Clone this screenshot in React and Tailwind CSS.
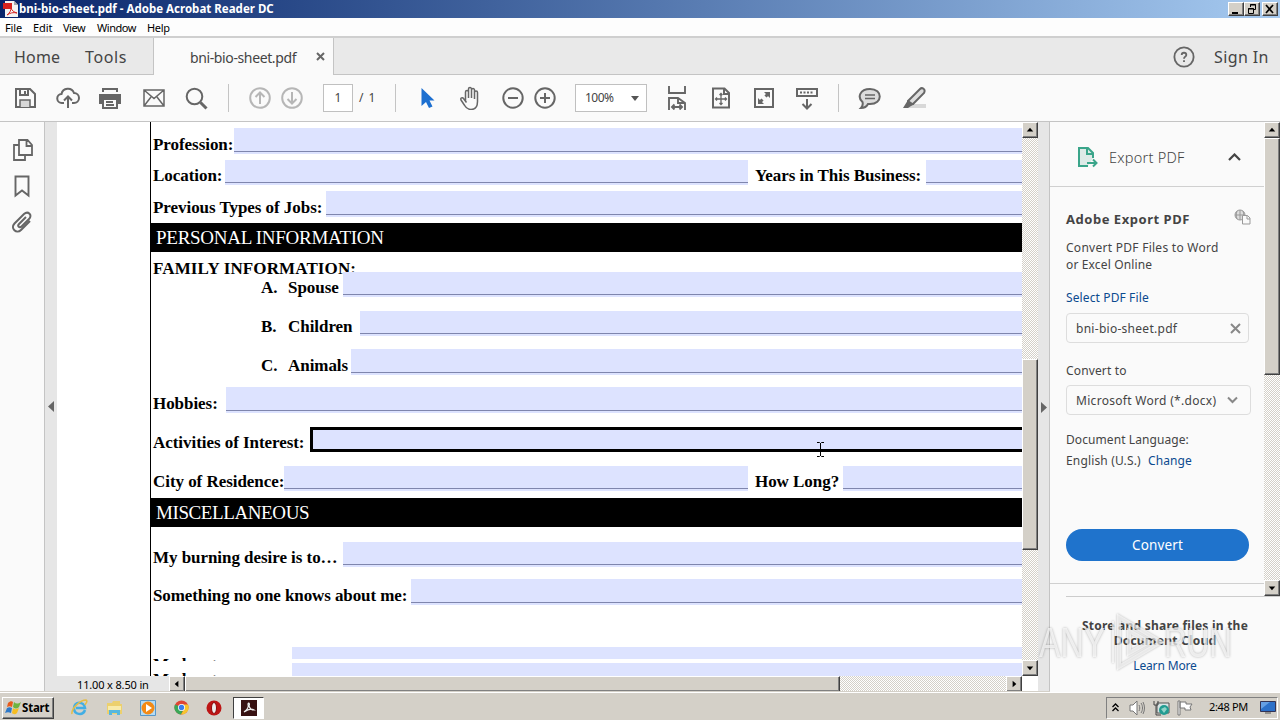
import React from "react";

// Pieces of the classic window chrome
const RAISED =
  "bg-[#d4d0c8] border border-t-white border-l-white border-r-[#404040] border-b-[#404040] shadow-[inset_-1px_-1px_0_#808080]";
const TRACK =
  "bg-[conic-gradient(#d4d0c8_25%,#ffffff_0_50%,#d4d0c8_0_75%,#ffffff_0)] bg-[length:2px_2px]";

const ARROWS = {
  up: "M4 9h7L7.500 5z",
  down: "M4 6h7L7.500 10z",
  left: "M9 4v7L5 7.500z",
  right: "M6 4v7l4-3.500z",
};

const ScrollButton = ({ dir }) => (
  <div className={`h-4 w-4 shrink-0 ${RAISED}`}>
    <svg width="14" height="14" viewBox="0 0 15 15">
      <path d={ARROWS[dir]} fill="#000" />
    </svg>
  </div>
);

const Icon = ({ children, size = 24, className = "" }) => (
  <svg
    width={size}
    height={size}
    viewBox="0 0 24 24"
    fill="none"
    stroke="#666"
    strokeWidth="2"
    className={`shrink-0 ${className}`}
  >
    {children}
  </svg>
);

const TitleBar = () => (
  <div className="flex h-[18px] items-center bg-gradient-to-r from-[#0a246a] to-[#a6caf0] pl-[3px] pr-0.5">
    <svg width="15" height="16" viewBox="0 0 15 16">
      <path d="M2 0h9l4 4v12H2z" fill="#f4f4f4" />
      <path d="M11 0v4h4z" fill="#aaa" />
      <path d="M0 2h9v6H0z" fill="#d8231f" />
      <path d="M4 14c3-2 4-5 4-7 1 3 3 4 6 5-4-1-7 0-10 2z" fill="none" stroke="#d8231f" />
    </svg>
    <span className="ml-px text-[11.500px] font-bold leading-[18px] tracking-[0.010px] text-white">
      bni-bio-sheet.pdf - Adobe Acrobat Reader DC
    </span>
    <div className="ml-auto flex">
      <div className={`h-3.5 w-4 ${RAISED}`}>
        <svg width="14" height="12"><path d="M3 9h6v2H3z" /></svg>
      </div>
      <div className={`h-3.5 w-4 ${RAISED}`}>
        <svg width="14" height="12" fill="none" stroke="#000">
          <path d="M5.500 4V1.500h5v5H9M5 2h6M3.500 5.500h5v5h-5zM3 6h6" />
        </svg>
      </div>
      <div className={`ml-0.5 h-3.5 w-4 ${RAISED}`}>
        <svg width="14" height="12"><path d="M3 2l7 8M10 2l-7 8" stroke="#000" strokeWidth="1.700" /></svg>
      </div>
    </div>
  </div>
);

const MenuBar = () => (
  <div className="flex h-5 border-b-2 border-[#cfcfcf] bg-[#fdfdfd] pl-[5px] text-[11px] leading-[20px] text-black">
    <span className="w-7 tracking-[-0.100px]">File</span>
    <span className="w-[30px] tracking-[-0.100px]">Edit</span>
    <span className="w-[34px] tracking-[-0.500px]">View</span>
    <span className="w-[50px] tracking-[-0.450px]">Window</span>
    <span className="tracking-[-0.350px]">Help</span>
  </div>
);

const TabBar = () => (
  <div className="flex h-[37px] bg-[#e9e9e9] text-[#444]">
    <div className="flex w-[154px] items-center border-b border-r border-[#c4c4c4] pl-3.5 pt-0.5 text-base">
      <span className="w-[71px] tracking-[0.200px]">Home</span>
      <span className="tracking-[0.600px]">Tools</span>
    </div>
    <div className="flex w-[179px] items-center bg-[#fafafa] pl-9">
      <span className="w-[126px] pt-px text-[14px] tracking-[-0.380px]">bni-bio-sheet.pdf</span>
      <svg width="9" height="9"><path d="M1 1l7 7M8 1L1 8" stroke="#666" strokeWidth="2" /></svg>
    </div>
    <div className="flex flex-1 items-center border-b border-l border-[#c4c4c4] pt-px">
      <Icon size={22} className="ml-auto mr-[19px]">
        <circle cx="12" cy="12" r="10.500" />
        <path d="M9.500 9.800c0-3.300 5-3.300 5 0 0 1.800-2.500 1.800-2.500 4M12 15.500v2" />
      </Icon>
      <span className="w-[66px] pt-px text-base tracking-[0.400px]">Sign In</span>
    </div>
  </div>
);

const Toolbar = () => (
  <div className="flex h-[47px] items-center border-b border-[#c4c4c4] bg-[#fafafa] pl-[13px] text-[#444]">
    <Icon className="mr-[19px]">
      <path d="M3 3h14l5 5v13H3z" />
      <path d="M7 3v6h8V3M12 5v3" />
      <path d="M7 21v-7h10v7" fill="#d8d8d8" strokeWidth="1.500" />
    </Icon>
    <Icon className="mr-[18px]">
      <path d="M8 17H6a4.500 4.500 0 0 1-.5-9 6.500 6.500 0 0 1 12.500-1 5 5 0 0 1 0 10h-2M12 22V11M8 14.500l4-4 4 4" />
    </Icon>
    <Icon className="mr-5">
      <path d="M1 8h22v10h-3v-4H4v4H1z" fill="#666" stroke="none" />
      <path d="M5 6V3h14v3" />
      <path d="M5 13h14v9H5zM8 16h7M8 19h8" fill="#fafafa" />
    </Icon>
    <Icon className="mr-[18px]">
      <path d="M2 4h20v16H2zM2 4l10 8.500L22 4M2 20l7-9M22 20l-7-9" strokeWidth="1.500" />
    </Icon>
    <Icon>
      <circle cx="10.500" cy="10.500" r="7.800" />
      <path d="M16.500 16.500l6 6" strokeWidth="3" />
    </Icon>
    <div className="ml-5 mr-[19px] h-7 w-px bg-[#c4c4c4]" />
    <Icon className="mr-2 opacity-45">
      <circle cx="12" cy="12" r="9.800" />
      <path d="M12 18V7M7.500 11L12 6.500l4.500 4.500" />
    </Icon>
    <Icon className="opacity-45">
      <circle cx="12" cy="12" r="9.800" />
      <path d="M12 6v11M7.500 13l4.500 4.500 4.500-4.500" />
    </Icon>
    <div className="ml-[19px] flex h-7 w-[30px] items-center justify-center border border-[#c0c0c0] bg-white text-xs">1</div>
    <span className="ml-1.5 w-[36px] text-xs tracking-[1px]">/ 1</span>
    <div className="h-7 w-px bg-[#c4c4c4]" />
    <Icon className="ml-[22px] mr-[17px]">
      <path d="M3.500 2v18l4.500-4 3 6 3.500-1.500-3-6h5z" fill="#1c6fd0" stroke="none" />
    </Icon>
    <Icon className="mr-[18px]">
      <path d="M6.500 15V6a1.500 1.500 0 0 1 3 0v6V3a1.500 1.500 0 0 1 3 0v9V4a1.500 1.500 0 0 1 3 0v9V6.500a1.500 1.500 0 0 1 3 0v9c0 5-2 8-6.500 8s-5.500-2.500-7-5l-3-4.500c-1-2 1.500-3 2.500-1.500l3 4" strokeWidth="1.500" />
    </Icon>
    <Icon className="mr-2">
      <circle cx="12" cy="12" r="9.700" />
      <path d="M7 12h10" />
    </Icon>
    <Icon>
      <circle cx="12" cy="12" r="9.700" />
      <path d="M7 12h10M12 7v10" />
    </Icon>
    <div className="ml-[18px] flex h-7 w-[72px] items-center justify-between border border-[#c0c0c0] bg-white pl-[9px] pr-[7px] text-xs">
      <span className="tracking-[-0.500px]">100%</span>
      <svg width="8" height="5"><path d="M0 0h8L4 5z" fill="#555" /></svg>
    </div>
    <Icon className="ml-[18px] mr-5">
      <path d="M4 0v7h16V0M4 24V12h9l7 5v7M13 12v5h6M7 21h10M9.500 18.500L7 21l2.500 2.500M14.500 18.500L17 21l-2.500 2.500" strokeWidth="1.900" />
    </Icon>
    <Icon className="mr-[19px]">
      <path d="M4 2.500h11.500L20 7v14.500H4zM15 2.500V8h5" />
      <path d="M6.500 13h11M12 7.500v11M8 11.500L6.500 13 8 14.500M16 11.500l1.500 1.500-1.500 1.500M10.500 9L12 7.500 13.500 9M10.500 17l1.500 1.500 1.500-1.500" strokeWidth="1.300" />
    </Icon>
    <Icon className="mr-[19px]">
      <path d="M3 3h18v18H3z" />
      <path d="M12 6h6v6zM6 12v6h6z" fill="#666" stroke="none" />
      <path d="M16 8l-2.500 2.500M8 16l2.500-2.500" strokeWidth="3" />
    </Icon>
    <Icon>
      <path d="M2 3h20v7H2zM12 13v10M7.500 18l4.500 4.500 4.500-4.500" />
      <path d="M5 6.500h14" strokeDasharray="2 1.500" />
    </Icon>
    <div className="ml-[19px] mr-[19px] h-7 w-px bg-[#c4c4c4]" />
    <Icon className="mr-5">
      <path d="M12 3c13 0 13 15 0 15l-2 0c-1 2-3 4-7 4 2-2 2-4 1.500-6C-1 11 2 3 12 3z" fill="#ddd" />
      <path d="M7 9h10M7 12.500h10" strokeWidth="1.500" />
    </Icon>
    <Icon>
      <path d="M8 18h16v4H4z" fill="#d8d8d8" stroke="none" />
      <path d="M6 15L18 3c2-2 6 0 4 4L11 18l-5 1z" fill="#ddd" />
      <path d="M6 14l6 4-6 4H1z" fill="#666" stroke="none" />
    </Icon>
  </div>
);

const LeftRail = () => (
  <div className="flex w-[45px] flex-col items-center gap-3 border-r border-[#c4c4c4] bg-[#fafafa] pt-4">
    <Icon className="ml-0.5">
      <path d="M8 2h8.500L21 7v10H8zM15.500 2v6H21M8 7H3v15h11v-5" strokeWidth="1.800" />
    </Icon>
    <Icon><path d="M5.500 2.500h13v19l-6.500-5-6.500 5z" strokeWidth="1.900" /></Icon>
    <Icon>
      <path d="M16 7l-7 7c-2 2 .5 4.500 2.500 2.500l7.500-7.500c4-4-1-8.500-5-5l-9.500 9.500c-4.500 5 2 11 6.500 6.500l9-9" />
    </Icon>
  </div>
);

const Field = ({ className = "h-[25px] flex-1" }) => (
  <div className={`shrink-0 border-b-2 border-[#dde3ff] bg-[#dde3ff] ${className}`}>
    <div className="h-full border-b border-[#7f86ad]" />
  </div>
);

// Starts one pixel above its row
const TallField = () => <Field className="-mt-px h-[26px] flex-1" />;

// One line of the form
const Row = ({ className, children }) => (
  <div className={`flex h-6 shrink-0 whitespace-nowrap pl-0.5 leading-[31px] tracking-[-0.050px] ${className}`}>
    {children}
  </div>
);

const Band = ({ className, children }) => (
  <div className={`h-[29px] shrink-0 bg-black pl-[5px] text-[19px] font-normal leading-[30px] text-white ${className}`}>
    {children}
  </div>
);

const PdfPage = () => (
  <div className="h-[554px] w-[965px] overflow-hidden bg-white pl-[93px]">
    <div className="flex h-full flex-col border-l border-black font-['Liberation_Serif',serif] text-[17px] font-bold text-black">
      <Row className="mt-[7px]">
        <span className="w-[81px]">Profession:</span>
        <TallField />
      </Row>
      <Row className="mt-[7px]">
        <span className="w-[72px]">Location:</span>
        <Field className="h-[25px] w-[523px]" />
        <span className="w-[178px] pl-[7px]">Years in This Business:</span>
        <Field />
      </Row>
      <Row className="mt-2">
        <span className="w-[173px]">Previous Types of Jobs:</span>
        <TallField />
      </Row>
      <Band className="mt-[7px] tracking-[-0.270px]">PERSONAL INFORMATION</Band>
      <div className="h-5 shrink-0 pl-0.5 leading-[33px] tracking-[0.130px]">FAMILY INFORMATION:</div>
      <Row>
        <span className="ml-[108px] w-[27px]">A.</span>
        <span className="w-[55px]">Spouse</span>
        <Field />
      </Row>
      <Row className="mt-[15px]">
        <span className="ml-[108px] w-[27px]">B.</span>
        <span className="w-[72px]">Children</span>
        <Field />
      </Row>
      <Row className="mt-[15px]">
        <span className="ml-[108px] w-[27px]">C.</span>
        <span className="w-[63px]">Animals</span>
        <TallField />
      </Row>
      <Row className="mt-3.5">
        <span className="w-[73px]">Hobbies:</span>
        <TallField />
      </Row>
      <Row className="mt-[15px]">
        <span className="w-[157px]">Activities of Interest:</span>
        <div className="relative h-[25px] flex-1 border-[3px] border-r-0 border-black bg-[#dde3ff]">
          <svg width="9" height="17" className="absolute left-[503px] top-[11px]">
            <path d="M1 1.500h2.500l1 1 1-1H8M4.500 2v13M1 15.500h2.500l1-1 1 1H8" fill="none" stroke="#000" />
          </svg>
        </div>
      </Row>
      <Row className="mt-[15px]">
        <span className="w-[131px]">City of Residence:</span>
        <Field className="h-[25px] w-[464px]" />
        <span className="w-[95px] pl-[7px]">How Long?</span>
        <Field />
      </Row>
      <Band className="mt-2 tracking-[-0.400px]">MISCELLANEOUS</Band>
      <Row className="mt-[15px]">
        <span className="w-[190px]">My burning desire is to…</span>
        <Field />
      </Row>
      <Row className="mt-3.5">
        <span className="w-[258px] tracking-[-0.100px]">Something no one knows about me:</span>
        <TallField />
      </Row>
      <div className="mt-[43px] flex h-3 shrink-0 pl-0.5">
        <span className="mt-2 h-1.5 w-[139px] overflow-hidden leading-[20px]">My key to success</span>
        <div className="flex-1 bg-[#dde3ff]" />
      </div>
      <div className="mt-1 flex h-[13px] shrink-0 pl-0.5">
        <span className="mt-[7px] h-1.5 w-[139px] overflow-hidden leading-[20px]">My key to success</span>
        <div className="flex-1 bg-[#dde3ff]" />
      </div>
    </div>
  </div>
);

const DocumentView = () => (
  <div className="flex w-[993px] flex-col bg-[#e6e6e6]">
    <div className="flex h-[554px]">
      <div className="flex w-3 items-center justify-center pt-3.5">
        <svg width="6" height="11"><path d="M6 0v11L0 5.500z" fill="#666" /></svg>
      </div>
      <PdfPage />
      <div className={`flex w-4 flex-col ${TRACK}`}>
        <ScrollButton dir="up" />
        <div className={`mt-[221px] h-[191px] ${RAISED}`} />
        <div className="mt-auto"><ScrollButton dir="down" /></div>
      </div>
    </div>
    <div className="flex h-4 w-[993px]">
      <span className="w-[124px] pl-8 text-[11px] leading-[17px] tracking-[-0.150px] text-black">11.00 x 8.50 in</span>
      <div className={`flex flex-1 ${TRACK}`}>
        <ScrollButton dir="left" />
        <div className={`w-[655px] ${RAISED}`} />
        <div className="ml-auto"><ScrollButton dir="right" /></div>
      </div>
      <div className="w-4 bg-white" />
    </div>
  </div>
);

const Watermark = () => (
  <div className="pointer-events-none absolute left-[-11px] top-[488px] flex h-[64px] w-[196px] items-center font-['Liberation_Sans',sans-serif] text-[43px] leading-[64px] text-white/70 [text-shadow:0_0_3px_rgba(0,0,0,0.300)]">
    <span className="w-[66px]"><span className="inline-block origin-left scale-x-[0.750]">ANY</span></span>
    <svg width="62" height="62" viewBox="0 0 62 62" fill="none" stroke="#fff" strokeOpacity="0.650" strokeWidth="4" className="shrink-0 drop-shadow-[0_0_1px_rgba(0,0,0,0.400)]">
      <path d="M14 6v50l42-25zM24 20v22l20-11z" />
      <path d="M8 10v42" strokeWidth="2" />
    </svg>
    <span className="ml-[-3px]"><span className="inline-block origin-left scale-x-[0.730]">RUN</span></span>
  </div>
);

const ExportPanel = () => (
  <div className="relative flex flex-1 flex-col bg-[#fafafa] text-xs text-[#444]">
    <div className="flex h-[474px]">
      <div className="flex w-[214px] flex-col">
        <div className="flex h-[65px] shrink-0 items-center border-b border-[#d0d0d0] pl-[26px] pt-1.5">
          <svg width="22" height="22" viewBox="0 0 22 22" fill="none" stroke="#3aa58a" strokeWidth="2">
            <path d="M12 20H3V2h9l5 5v5" fill="#ddeae7" />
            <path d="M11 2v6h6M11 17h9M17 13.500l3.500 3.500-3.500 3.500" />
          </svg>
          <span className="ml-[11px] w-[119px] pt-0.5 text-[14.500px] font-light tracking-[0.250px]">Export PDF</span>
          <svg width="13" height="8"><path d="M1 7l5.500-5.500L12 7" fill="none" stroke="#444" strokeWidth="2.200" /></svg>
        </div>
        <div className="flex flex-1 flex-col pl-4 pr-[13px]">
          <div className="mt-[22px] flex h-5 items-center justify-between">
            <span className="pt-0.5 text-[13px] font-bold tracking-[0.530px]">Adobe Export PDF</span>
            <svg width="17" height="16" fill="none" stroke="#999" className="mb-1">
              <circle cx="6" cy="6" r="5" fill="#ddd" />
              <path d="M1 6h10M6 1v10M3 2c-1 3-1 5 0 8M9 2c1 3 1 5 0 8" />
              <path d="M8.500 6.500h5l2.500 2.500v6H8.500zM13 6.500V10h3" fill="#fafafa" />
            </svg>
          </div>
          <p className="mt-2.5 h-[34px] whitespace-nowrap leading-[17px] tracking-[0.270px]">
            Convert PDF Files to Word<br /><span className="tracking-[0.150px]">or Excel Online</span>
          </p>
          <span className="mt-4 leading-[18px] tracking-[0.120px] text-[#0b4a8f]">Select PDF File</span>
          <div className="mt-1.5 flex h-[30px] w-[183px] shrink-0 items-center justify-between rounded-sm border border-[#ddd] pl-[9px] pr-[7px]">
            <span className="pt-px tracking-[0.280px]">bni-bio-sheet.pdf</span>
            <svg width="11" height="11"><path d="M1 1l9 9M10 1l-9 9" stroke="#888" strokeWidth="2" /></svg>
          </div>
          <span className="mt-[18px] leading-[20px] tracking-[0.150px]">Convert to</span>
          <div className="mt-1 flex h-[30px] w-[185px] shrink-0 items-center justify-between rounded-sm border border-[#ddd] pl-[9px] pr-3">
            <span className="whitespace-nowrap pt-0.5 tracking-[0.300px]">Microsoft Word (*.docx)</span>
            <svg width="11" height="8"><path d="M1 1.500l4.500 4.500L10 1.500" fill="none" stroke="#888" strokeWidth="2" /></svg>
          </div>
          <p className="mt-3.5 h-[42px] whitespace-nowrap leading-[21px]">
            <span className="tracking-[0.080px]">Document Language:</span><br />
            <span className="inline-block w-[82px] tracking-[0.150px]">English (U.S.)</span>
            <span className="tracking-[0.100px] text-[#0b4a8f]">Change</span>
          </p>
          <div className="mt-[58px] flex h-8 w-[183px] shrink-0 items-center justify-center rounded-full bg-[#1f73cc] text-[13.500px] tracking-[0.150px] text-white">
            Convert
          </div>
          <div className="ml-[-16px] mr-[-13px] mt-[22px] h-px shrink-0 bg-[#d0d0d0]" />
        </div>
      </div>
      <div className={`flex w-4 flex-col ${TRACK}`}>
        <ScrollButton dir="up" />
        <div className={`h-[237px] ${RAISED}`} />
        <div className="mt-auto"><ScrollButton dir="down" /></div>
      </div>
    </div>
    <div className="ml-4 h-px bg-[#ccc]" />
    <div className="mt-[21px] text-center leading-[15px]">
      <p className="font-bold tracking-[0.230px]">Store and share files in the<br />Document Cloud</p>
      <p className="mt-2.5 tracking-[-0.150px] text-[#0b4a8f]">Learn More</p>
    </div>
    <Watermark />
  </div>
);

const Taskbar = () => (
  <div className="flex h-7 items-center border-t border-white bg-[#d4d0c8] pl-0.5 text-black shadow-[0_-1px_0_#d4d0c8]">
    <div className={`mt-0.5 flex h-[22px] w-[52px] items-center ${RAISED}`}>
      <svg width="17" height="16" viewBox="0 0 17 16" className="ml-0.5 shrink-0">
        <path d="M3 3c2-2 4-2 5-1L7 7C5 6 4 6 2 7z" fill="#e85b1b" />
        <path d="M9 2c2 2 4 2 7 0l-2 5c-2 2-4 2-6 0z" fill="#6eb43f" />
        <path d="M2 8c2-1 3-1 5 0l-1 5c-2-1-4-1-6 0z" fill="#2e79c9" />
        <path d="M8 8c2 2 4 1 6 0l-2 5c-2 2-4 1-5 0z" fill="#f6bd21" />
      </svg>
      <span className="text-[11.500px] font-bold tracking-[-0.200px]">Start</span>
    </div>
    <div className="ml-[17px] mt-0.5 flex w-[151px] items-center justify-between">
      <svg width="17" height="17" viewBox="0 0 17 17" fill="none">
        <path d="M14 11c-2 6-11 5-11-2s10-7 11 0H5" stroke="#42aee4" strokeWidth="2.500" />
        <path d="M1 15C0 10 9 1 15 1c2 1 0 3-1 5" stroke="#e5bd46" strokeWidth="1.500" />
      </svg>
      <svg width="17" height="16" viewBox="0 0 17 16">
        <path d="M1 3h5l1-2h7v3h2v10H1z" fill="#ecd06d" />
        <path d="M2 6h13v4H2z" fill="#f8ebaa" />
        <path d="M3 15v-5h11v5h-3v-2H6v2z" fill="#57b7de" />
      </svg>
      <svg width="16" height="16">
        <path d="M.5.500h15v15H.5z" fill="#b4dbf4" stroke="#5797c8" />
        <circle cx="8" cy="8" r="6.500" fill="#f38a16" />
        <path d="M6 4v8l6-4z" fill="#fff" />
      </svg>
      <svg width="15" height="15" viewBox="0 0 15 15">
        <circle cx="7.500" cy="7.500" r="7" fill="#df4535" />
        <path d="M1 4.500A7 7 0 0 0 7 14.500l3-6z" fill="#3aa757" />
        <path d="M7.500 4.500H14A7 7 0 0 1 7 14.500l3.500-6z" fill="#f6c52f" />
        <circle cx="7.500" cy="7.500" r="3.500" fill="#fff" />
        <circle cx="7.500" cy="7.500" r="2.700" fill="#3b7ded" />
      </svg>
      <svg width="16" height="16">
        <circle cx="8" cy="8" r="7.500" fill="#bd1515" />
        <ellipse cx="8" cy="8" rx="2.500" ry="5.500" fill="#eee" stroke="#8d0909" />
      </svg>
    </div>
    <div className="ml-[11px] mt-0.5 flex h-[22px] w-[31px] items-center justify-center border border-b-white border-l-[#404040] border-r-white border-t-[#404040] bg-white">
      <svg width="16" height="16">
        <path d="M0 0h16v16H0z" fill="#381111" />
        <path d="M3 12c3-2 5-5 4-8 1-2 2 0 1 2 1 3 3 4 5 4-3-2-7 0-10 2z" fill="none" stroke="#eee" strokeWidth="1.200" />
      </svg>
    </div>
    <div className="ml-auto mr-0.5 mt-0.5 flex h-[22px] w-[172px] items-center border border-b-white border-l-[#808080] border-r-white border-t-[#808080] pl-[5px]">
      <svg width="7" height="9" fill="none" stroke="#000" strokeWidth="1.300"><path d="M.5 4l3-3 3 3M.5 8l3-3 3 3" /></svg>
      <svg width="17" height="16" viewBox="0 0 17 16" className="ml-2.5" fill="none" stroke="#777">
        <path d="M1 5h3l4-4v14l-4-4H1z" fill="#fff" />
        <path d="M10 5c1 2 1 4 0 6M12 3c2 3 2 7 0 10M14 2c2 4 2 8 0 12" />
      </svg>
      <svg width="17" height="16" viewBox="0 0 17 16" className="ml-[7px]">
        <path d="M4 3h12v10H4z" fill="#d7e4e4" stroke="#555" />
        <path d="M1 1v4h4V1M3 5v10h5" stroke="#444" fill="none" />
        <circle cx="11" cy="10" r="5" fill="#229c91" />
        <path d="M8 9l4-2 2 2-3 4z" fill="#91d3c8" />
      </svg>
      <svg width="17" height="16" viewBox="0 0 17 16" className="ml-[7px]" fill="#fff" stroke="#777">
        <path d="M1 1h2v14H1zM3 2h6v2h6l-2 3 1 3H8V8H3z" />
      </svg>
      <span className="ml-[15px] w-[51px] whitespace-nowrap text-[11px] tracking-[-0.350px]">2:48 PM</span>
      <svg width="16" height="13" className="shrink-0">
        <path d="M.5.500h15v10H.5z" fill="#2c70c8" stroke="#335" />
        <path d="M1 1h9L1 8z" fill="#659fe3" />
        <path d="M5 12h6" stroke="#555" />
      </svg>
    </div>
  </div>
);

const App = () => {
  return (
    <div className="flex h-[720px] w-[1280px] flex-col overflow-hidden bg-[#fafafa] font-['Noto_Sans','Open_Sans',sans-serif]">
      <TitleBar />
      <MenuBar />
      <TabBar />
      <Toolbar />
      <div className="flex h-[570px] shrink-0">
        <LeftRail />
        <DocumentView />
        <div className="flex w-3 items-center justify-center border-r border-[#c4c4c4] bg-[#e6e6e6]">
          <svg width="6" height="11"><path d="M0 0v11l6-5.500z" fill="#666" /></svg>
        </div>
        <ExportPanel />
      </div>
      <Taskbar />
    </div>
  );
};

export default App;
